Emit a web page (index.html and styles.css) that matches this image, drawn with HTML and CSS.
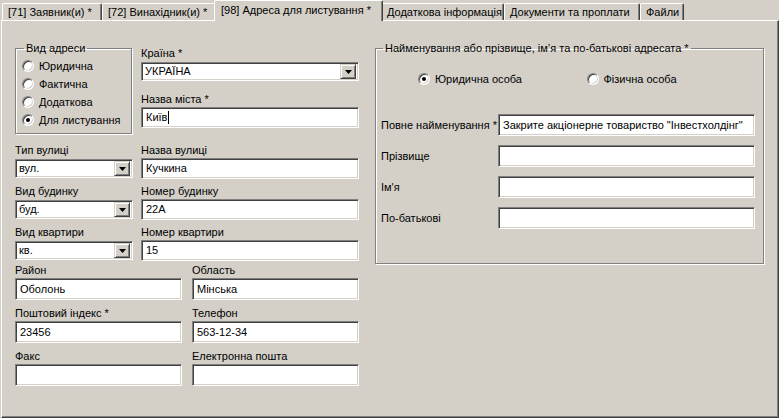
FILE: index.html
```html
<!DOCTYPE html>
<html lang="uk">
<head>
    <meta charset="UTF-8">
    <meta name="viewport" content="width=device-width, initial-scale=1.0">
    <title>Адреса для листування</title>
    <link rel="stylesheet" href="styles.css">
</head>
<body>
    <div class="tabs">
        <div class="tab tab-applicant">[71] Заявник(и) *</div>
        <div class="tab tab-inventor">[72] Винахідник(и) *</div>
        <div class="tab tab-address active">[98] Адреса для листування *</div>
        <div class="tab tab-extra">Додаткова інформація</div>
        <div class="tab tab-docs">Документи та проплати</div>
        <div class="tab tab-files">Файли</div>
    </div>

    <div class="panel">
        <div class="address">
            <div class="top-row">
                <fieldset class="group kind">
                    <legend>Вид адреси</legend>
                    <div class="radio-line"><span class="radio"></span>Юридична</div>
                    <div class="radio-line"><span class="radio"></span>Фактична</div>
                    <div class="radio-line"><span class="radio"></span>Додаткова</div>
                    <div class="radio-line"><span class="radio checked"></span>Для листування</div>
                </fieldset>

                <div class="city-col">
                    <div class="field">
                        <label>Країна *</label>
                        <div class="combo"><span class="value">УКРАЇНА</span><span class="drop"><svg width="7" height="4" viewBox="0 0 7 4"><polygon points="0,0 7,0 3.5,4" fill="#000"/></svg></span></div>
                    </div>
                    <div class="field city">
                        <label>Назва міста *</label>
                        <div class="edit">Київ<span class="caret"></span></div>
                    </div>
                </div>
            </div>

            <div class="street-grid">
                <div class="field">
                    <label>Тип вулиці</label>
                    <div class="combo"><span class="value">вул.</span><span class="drop"><svg width="7" height="4" viewBox="0 0 7 4"><polygon points="0,0 7,0 3.5,4" fill="#000"/></svg></span></div>
                </div>
                <div class="field">
                    <label>Назва вулиці</label>
                    <div class="edit">Кучкина</div>
                </div>
                <div class="field">
                    <label>Вид будинку</label>
                    <div class="combo"><span class="value">буд.</span><span class="drop"><svg width="7" height="4" viewBox="0 0 7 4"><polygon points="0,0 7,0 3.5,4" fill="#000"/></svg></span></div>
                </div>
                <div class="field">
                    <label>Номер будинку</label>
                    <div class="edit">22А</div>
                </div>
                <div class="field">
                    <label>Вид квартири</label>
                    <div class="combo"><span class="value">кв.</span><span class="drop"><svg width="7" height="4" viewBox="0 0 7 4"><polygon points="0,0 7,0 3.5,4" fill="#000"/></svg></span></div>
                </div>
                <div class="field">
                    <label>Номер квартири</label>
                    <div class="edit">15</div>
                </div>
            </div>

            <div class="contact-grid">
                <div class="field">
                    <label>Район</label>
                    <div class="edit">Оболонь</div>
                </div>
                <div class="field">
                    <label>Область</label>
                    <div class="edit">Мінська</div>
                </div>
                <div class="field">
                    <label>Поштовий індекс *</label>
                    <div class="edit">23456</div>
                </div>
                <div class="field">
                    <label>Телефон</label>
                    <div class="edit">563-12-34</div>
                </div>
                <div class="field">
                    <label>Факс</label>
                    <div class="edit"></div>
                </div>
                <div class="field">
                    <label>Електронна пошта</label>
                    <div class="edit"></div>
                </div>
            </div>
        </div>

        <fieldset class="group addressee">
            <legend>Найменування або прізвище, ім’я та по-батькові адресата *</legend>
            <div class="person-type">
                <div class="radio-line"><span class="radio checked"></span>Юридична особа</div>
                <div class="radio-line"><span class="radio"></span>Фізична особа</div>
            </div>
            <div class="name-grid">
                <label>Повне найменування *</label>
                <div class="edit">Закрите акціонерне товариство "Інвестхолдінг"</div>
                <label>Прізвище</label>
                <div class="edit"></div>
                <label>Ім'я</label>
                <div class="edit"></div>
                <label>По-батькові</label>
                <div class="edit"></div>
            </div>
        </fieldset>
    </div>
</body>
</html>
```

FILE: styles.css
```css
body {
  margin: 0;
  background: #d4d0c8;
  font-family: "Liberation Sans", Arial, sans-serif;
  font-size: 11px;
  color: #000;
  width: 779px;
  height: 418px;
  overflow: hidden;
}

/* tab strip */
.tabs {
  display: flex;
  align-items: flex-end;
  height: 20px;
  padding-left: 2px;
}

.tab {
  flex: none;
  height: 17px;
  line-height: 16px;
  padding-left: 5px;
  border-top: 1px solid #fff;
  border-left: 1px solid #fff;
  border-right: 1px solid #404040;
  box-shadow: inset -1px 0 #808080;
  border-top-left-radius: 2px;
  border-top-right-radius: 2px;
  white-space: nowrap;
  box-sizing: border-box;
}

.tab-applicant { width: 100px; }
.tab-inventor { width: 114px; }
.tab-address { width: 165px; }
.tab-extra { width: 123px; }
.tab-docs { width: 136px; }
.tab-files { width: 44px; }

.tab.active {
  width: 169px;
  height: 21px;
  line-height: 19px;
  margin: 0 -2px -1px -2px;
  padding-left: 6px;
  background: #d4d0c8;
  position: relative;
  z-index: 1;
}

/* page */
.panel {
  display: flex;
  margin-left: 1px;
  width: 778px;
  height: 398px;
  box-sizing: border-box;
  border-top: 1px solid #fff;
  border-left: 1px solid #fff;
  border-right: 1px solid #404040;
  border-bottom: 1px solid #404040;
  box-shadow: inset -1px -1px #808080;
  padding: 21px 0 0 13px;
  gap: 16px;
}

.address {
  width: 344px;
}

.group {
  margin: 0;
  border: 1px solid #808080;
  box-shadow: inset 1px 1px #fff, 1px 1px #fff;
  box-sizing: border-box;
  min-width: 0;
}

.group legend {
  padding: 0 2px;
  margin-left: 2px;
  line-height: 13px;
}

.top-row {
  display: flex;
  gap: 9px;
}

.kind {
  width: 117px;
  height: 92px;
  padding: 2px 0 0 6px;
}

.radio-line {
  display: flex;
  align-items: center;
  height: 18px;
  white-space: nowrap;
}

.radio {
  display: flex;
  align-items: center;
  justify-content: center;
  width: 12px;
  height: 12px;
  box-sizing: border-box;
  border: 1px solid;
  border-color: #808080 #fff #fff #808080;
  border-radius: 50%;
  box-shadow: inset 1px 1px #404040, inset -1px -1px #d4d0c8;
  background: #fff;
  margin-right: 5px;
  flex: none;
}

.radio.checked::after {
  content: "";
  width: 4px;
  height: 4px;
  border-radius: 50%;
  background: #000;
}

.city-col {
  width: 218px;
  padding-top: 5px;
}

.field {
  display: flex;
  flex-direction: column;
}

.field label {
  line-height: 13px;
  height: 13px;
  margin-bottom: 1px;
}

.city {
  margin-top: 12px;
}

.edit,
.combo {
  height: 21px;
  box-sizing: border-box;
  border: 1px solid;
  border-color: #808080 #fff #fff #808080;
  box-shadow: inset 1px 1px #404040, inset -1px -1px #d4d0c8;
  background: #fff;
  padding: 0 4px;
  line-height: 19px;
  white-space: nowrap;
  overflow: hidden;
  display: flex;
  align-items: center;
}

.combo {
  height: 19px;
  padding: 0 2px 0 3px;
  margin-top: 1px;
}

.combo .value {
  flex: 1;
}

.drop {
  width: 16px;
  height: 15px;
  box-sizing: border-box;
  background: #d4d0c8;
  border: 1px solid;
  border-color: #d4d0c8 #404040 #404040 #d4d0c8;
  box-shadow: inset 1px 1px #fff, inset -1px -1px #808080;
  display: flex;
  align-items: center;
  justify-content: center;
}

.drop svg {
  display: block;
}

.caret {
  display: inline-block;
  width: 1px;
  height: 13px;
  background: #000;
  margin-left: 1px;
}

.street-grid {
  display: grid;
  grid-template-columns: 118px 218px;
  column-gap: 8px;
  row-gap: 6px;
  margin-top: 10px;
}

.contact-grid {
  display: grid;
  grid-template-columns: 167px 167px;
  column-gap: 10px;
  row-gap: 7px;
  margin-top: 3px;
}

.contact-grid .edit {
  height: 22px;
}

/* addressee */
.addressee {
  width: 389px;
  height: 222px;
  padding: 0 8px 0 5px;
}

.person-type {
  display: flex;
  margin-top: 15px;
  padding-left: 37px;
}

.person-type .radio-line {
  width: 180px;
}

.name-grid {
  display: grid;
  grid-template-columns: 117px 257px;
  grid-auto-rows: 22px;
  row-gap: 9px;
  align-items: center;
  margin-top: 26px;
}

.name-grid .edit {
  height: 22px;
}
```
